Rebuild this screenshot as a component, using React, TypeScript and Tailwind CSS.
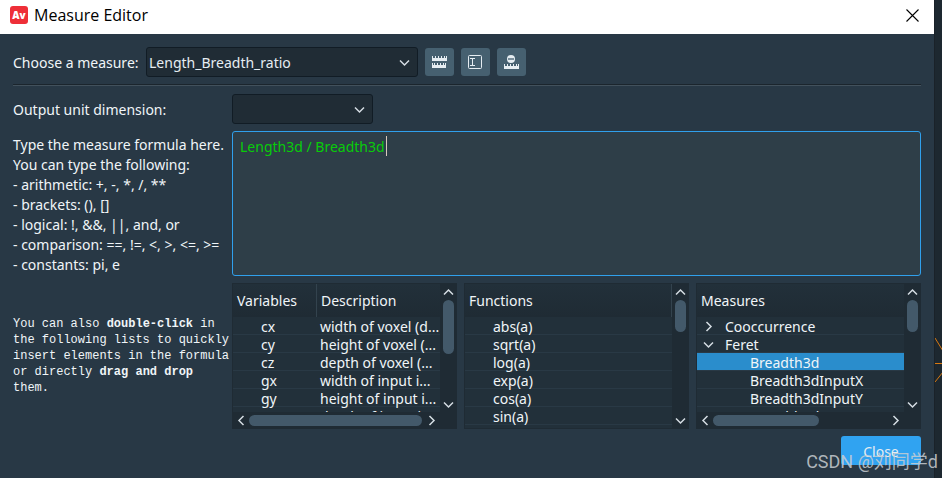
import { useState, type ReactNode } from "react";

type Direction = "up" | "down" | "left" | "right";

const chevrons: Record<Direction, string> = {
  up: "M1 7.5 5.5 3 10 7.5",
  down: "M1 3.5 5.5 8 10 3.5",
  left: "M7.5 1 3 5.5 7.5 10",
  right: "M3.5 1 8 5.5 3.5 10",
};

function Chevron({ direction }: { direction: Direction }) {
  return (
    <svg width="11" height="11" viewBox="0 0 11 11" fill="none" stroke="#d5dde3" strokeWidth="1.5" aria-hidden="true">
      <path d={chevrons[direction]} />
    </svg>
  );
}

function Combo({ id, options, className }: { id: string; options: string[]; className: string }) {
  return (
    <div className={`relative h-[30px] ${className}`}>
      <select
        id={id}
        className="h-full w-full appearance-none rounded-[3px] border border-[#111c25] bg-[#202c35] pl-[2px] pr-6 pt-px text-sm text-[#e6edf2] outline-none"
      >
        {options.map((option) => (
          <option key={option}>{option}</option>
        ))}
      </select>
      <span className="pointer-events-none absolute inset-y-0 right-2 flex items-center">
        <Chevron direction="down" />
      </span>
    </div>
  );
}

function ToolButton({ label, children }: { label: string; children: ReactNode }) {
  return (
    <button type="button" aria-label={label} className="flex h-7 w-[29px] items-center justify-center rounded-[3px] bg-[#466070]">
      {children}
    </button>
  );
}

function ScrollButton({ direction }: { direction: Direction }) {
  return (
    <button type="button" aria-label={`Scroll ${direction}`} className="flex size-4 shrink-0 items-center justify-center">
      <Chevron direction={direction} />
    </button>
  );
}

function ListPanel({ children, verticalThumb, horizontalThumb }: { children: ReactNode; verticalThumb: string; horizontalThumb?: string }) {
  return (
    <div className="flex h-[146px] min-w-0 flex-col border border-[#1f2b34] bg-[#1f2b34]">
      <div className="flex min-h-0 flex-1">
        <div className="min-w-0 flex-1 overflow-hidden bg-[#22303a]">{children}</div>
        <div className="flex w-4 flex-col items-center">
          <ScrollButton direction="up" />
          <div className="flex-1">
            <div className={`w-[11px] rounded-full bg-[#43596a] ${verticalThumb}`} />
          </div>
          <ScrollButton direction="down" />
        </div>
      </div>
      {horizontalThumb && (
        <div className="flex h-4 items-center pr-[17px]">
          <ScrollButton direction="left" />
          <div className="flex-1">
            <div className={`h-[11px] rounded-full bg-[#43596a] ${horizontalThumb}`} />
          </div>
          <ScrollButton direction="right" />
        </div>
      )}
    </div>
  );
}

const headCell = "h-[33px] bg-linear-to-b from-[#22303a] to-[#1f2b34] p-0 pl-1 text-left font-normal";
const bodyCell = "h-[18px] whitespace-nowrap border-b border-[#293945] p-0 pt-[2px] leading-[15px]";
const tableStyle = "w-full table-fixed border-separate border-spacing-0 text-sm text-[#f0f5f8]";

const variables = [
  ["cx", "width of voxel (d..."],
  ["cy", "height of voxel (..."],
  ["cz", "depth of voxel (..."],
  ["gx", "width of input i..."],
  ["gy", "height of input i..."],
  ["gz", "depth of input i..."],
];

const functions = ["abs(a)", "sqrt(a)", "log(a)", "exp(a)", "cos(a)", "sin(a)"];

const feretMeasures = ["Breadth3d", "Breadth3dInputX", "Breadth3dInputY", "Breadth3dInputZ"];

export default function App() {
  const [formula, setFormula] = useState("Length3d / Breadth3d ");

  return (
    <div className="relative flex min-h-screen overflow-hidden bg-[#1d2830] font-['Noto_Sans','Open_Sans',sans-serif] text-sm text-[#f0f5f8]">
      <main className="flex min-w-0 flex-1 flex-col bg-[#283845]">
        <header className="flex h-[34px] items-center bg-white pl-[10px] pr-[15px] text-black">
          <svg width="18" height="18" viewBox="0 0 18 18" className="mb-1" aria-hidden="true">
            <rect width="18" height="18" rx="3" fill="#ee2f38" />
            <text x="9" y="12.5" textAnchor="middle" fontSize="10" fontWeight="800" fontFamily="Open Sans" fill="#fff">
              Av
            </text>
          </svg>
          <h1 className="mb-1 ml-[6px] flex-1 font-['Open_Sans',sans-serif] text-base font-normal">Measure Editor</h1>
          <button type="button" aria-label="Close window" className="mb-1">
            <svg width="13" height="13" viewBox="0 0 13 13" stroke="#000" strokeWidth="1.1" aria-hidden="true">
              <path d="M.5.5l12 12M12.5.5l-12 12" />
            </svg>
          </button>
        </header>

        <div className="flex flex-1 flex-col gap-[7px] p-[13px]">
          <div className="flex items-center gap-[7px]">
            <label htmlFor="measure" className="min-w-[126px] pt-px">
              Choose a measure:
            </label>
            <Combo id="measure" options={["Length_Breadth_ratio"]} className="w-[272px]" />
            <div className="flex gap-[7px]">
              <ToolButton label="New measure">
                <svg width="15" height="13" viewBox="0 0 15 13" fill="#e6edf2" aria-hidden="true">
                  <path d="M0 0h1v2h2V0h1v2h2V0h1v2h2V0h1v2h2V0h1v2h1V0h1v5H0zM0 12h14V7h-1v2h-1V7h-1v2H9V7H8v2H6V7H5v2H3V7H2v2H1V7H0z" />
                </svg>
              </ToolButton>
              <ToolButton label="Rename measure">
                <svg width="15" height="15" viewBox="0 0 15 15" fill="none" stroke="#e6edf2" aria-hidden="true">
                  <rect x=".5" y=".5" width="13" height="13" rx="1" />
                  <path d="M2 3.500h5M2 10.500h5M4.500 3.500v7" />
                </svg>
              </ToolButton>
              <ToolButton label="Delete measure">
                <svg width="15" height="15" viewBox="0 0 15 15" aria-hidden="true">
                  <circle cx="7" cy="4" r="4" fill="#e6edf2" />
                  <path d="M4 4h6" stroke="#7d919e" strokeWidth="2" />
                  <path d="M0 9h1v2h2V9h1v2h2V9h1v2h2V9h1v2h2V9h1v2h1V9h1v5H0z" fill="#e6edf2" />
                </svg>
              </ToolButton>
            </div>
          </div>

          <hr className="mb-px h-[2px] border-b border-t border-b-[#42515c] border-t-[#1b252d]" />

          <div className="grid grid-cols-[219px_minmax(0,1fr)] gap-y-[7px]">
            <label htmlFor="unit" className="self-center pt-px">
              Output unit dimension:
            </label>
            <Combo id="unit" options={[""]} className="w-[141px]" />

            <label htmlFor="formula" className="whitespace-nowrap pt-1 leading-5">
              Type the measure formula here.
              <br />
              You can type the following:
              <br />
              - arithmetic: +, -, *, /, **
              <br />
              - brackets: (), []
              <br />
              - logical: !, &amp;&amp;, ||, and, or
              <br />
              - comparison: ==, !=, &lt;, &gt;, &lt;=, &gt;=
              <br />
              - constants: pi, e
            </label>
            <div className="relative h-[145px]">
              <textarea
                id="formula"
                spellCheck={false}
                value={formula}
                onChange={(event) => setFormula(event.target.value)}
                className="block h-full w-full resize-none rounded-[3px] border border-[#30a0ec] bg-[#2e3e48] px-[7px] py-[5px] text-sm leading-5 text-[#08cc08] outline-none"
              />
              <span className="pointer-events-none absolute left-[154px] top-[5px] h-5 w-px bg-[#d8c8bc]" />
            </div>

            <p className="self-center whitespace-nowrap font-['Liberation_Mono',monospace] text-xs leading-4">
              You can also <b>double-click</b> in
              <br />
              the following lists to quickly
              <br />
              insert elements in the formula
              <br />
              or directly <b>drag and drop</b>
              <br />
              them.
            </p>
            <div className="grid grid-cols-3 gap-[7px]">
              <ListPanel verticalThumb="h-[54px]" horizontalThumb="w-[173px]">
                <table className={tableStyle}>
                  <thead>
                    <tr>
                      <th className={`w-[84px] border-r border-[#33434e] ${headCell}`}>Variables</th>
                      <th className={headCell}>Description</th>
                    </tr>
                  </thead>
                  <tbody>
                    {variables.map(([name, description]) => (
                      <tr key={name}>
                        <td className={`${bodyCell} pl-7`}>{name}</td>
                        <td className={`${bodyCell} pl-[3px]`}>{description}</td>
                      </tr>
                    ))}
                  </tbody>
                </table>
              </ListPanel>

              <ListPanel verticalThumb="h-8">
                <table className={tableStyle}>
                  <thead>
                    <tr>
                      <th className={`border-r border-[#33434e] ${headCell}`}>Functions</th>
                    </tr>
                  </thead>
                  <tbody>
                    {functions.map((name) => (
                      <tr key={name}>
                        <td className={`${bodyCell} pl-7`}>{name}</td>
                      </tr>
                    ))}
                  </tbody>
                </table>
              </ListPanel>

              <ListPanel verticalThumb="h-8" horizontalThumb="w-[106px]">
                <table className={tableStyle}>
                  <thead>
                    <tr>
                      <th className={headCell}>Measures</th>
                    </tr>
                  </thead>
                  <tbody>
                    <tr>
                      <td className={`${bodyCell} pl-[6px]`}>
                        <div className="flex items-center gap-[11px]">
                          <Chevron direction="right" />
                          Cooccurrence
                        </div>
                      </td>
                    </tr>
                    <tr>
                      <td className={`${bodyCell} pl-[6px]`}>
                        <div className="flex items-center gap-[11px]">
                          <Chevron direction="down" />
                          Feret
                        </div>
                      </td>
                    </tr>
                    {feretMeasures.map((name) => (
                      <tr key={name} className={name === "Breadth3d" ? "bg-[#2a8dcc]" : ""}>
                        <td className={`${bodyCell} pl-[53px]`}>{name}</td>
                      </tr>
                    ))}
                  </tbody>
                </table>
              </ListPanel>
            </div>
          </div>

          <button type="button" className="h-[29px] w-20 self-end rounded-[3px] bg-[#30a3f1] pt-[2px] text-sm text-[#e6edf2]">
            Close
          </button>
        </div>
      </main>

      <aside className="flex w-2 shrink-0 flex-col justify-end border-l border-[#1a2229] pb-24">
        <svg width="8" height="46" viewBox="0 0 8 46" fill="none" stroke="#d9780f" aria-hidden="true">
          <path d="M0 2l8 13M0 27.500h8M0 46l8-10" />
        </svg>
      </aside>

      <span className="pointer-events-none absolute bottom-1 right-1 whitespace-nowrap font-['Roboto','Noto_Sans_CJK_SC',sans-serif] text-lg font-normal leading-6 text-[#c9ced2]/85">
        CSDN @刘同学d
      </span>
    </div>
  );
}
